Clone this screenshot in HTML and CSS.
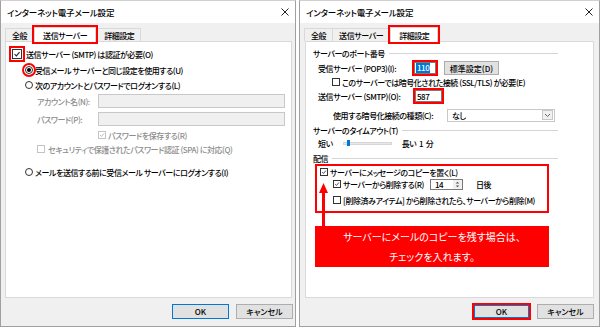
FILE: index.html
```html
<!DOCTYPE html>
<html lang="ja">
<head>
    <meta charset="UTF-8">
    <meta name="viewport" content="width=device-width, initial-scale=1.0">
    <title>インターネット電子メール設定</title>
    <link rel="stylesheet" href="styles.css">
</head>
<body>
    <!-- 左: 送信サーバー タブ -->
    <div class="dialog left">
        <div class="titlebar">
            <span>インターネット電子メール設定</span>
            <svg class="close" viewBox="0 0 8 8"><path d="M0.5 0.5 L7.5 7.5 M7.5 0.5 L0.5 7.5"/></svg>
        </div>
        <div class="tabs">
            <span class="tab">全般</span>
            <span class="tab active mark">送信サーバー</span>
            <span class="tab">詳細設定</span>
        </div>
        <div class="panel">
            <div class="row l-r1">
                <span class="cb big mark"><svg viewBox="0 0 10 10"><path d="M2 5.2 L4.2 7.4 L8.2 2.6"/></svg></span>
                送信サーバー (SMTP) は認証が必要(O)
            </div>
            <div class="row l-r2 ind1"><span class="radio on mark"></span>受信メール サーバーと同じ設定を使用する(U)</div>
            <div class="row l-r3 ind1"><span class="radio"></span>次のアカウントとパスワードでログオンする(L)</div>
            <div class="row l-acct ind2 dim"><span class="flabel">アカウント名(N):</span><span class="input off wide"></span></div>
            <div class="row l-pass ind2 dim"><span class="flabel">パスワード(P):</span><span class="input off wide"></span></div>
            <div class="row l-save ind3 dim">
                <span class="cb off"><svg viewBox="0 0 10 10"><path d="M2 5.2 L4.2 7.4 L8.2 2.6"/></svg></span>
                パスワードを保存する(R)
            </div>
            <div class="row l-spa ind2 dim"><span class="cb off"></span>セキュリティで保護されたパスワード認証 (SPA) に対応(Q)</div>
            <div class="row l-r8 ind1"><span class="radio"></span>メールを送信する前に受信メール サーバーにログオンする(I)</div>
        </div>
        <div class="footer">
            <button class="btn default">OK</button>
            <button class="btn">キャンセル</button>
        </div>
    </div>

    <!-- 右: 詳細設定 タブ -->
    <div class="dialog right">
        <div class="titlebar">
            <span>インターネット電子メール設定</span>
            <svg class="close" viewBox="0 0 8 8"><path d="M0.5 0.5 L7.5 7.5 M7.5 0.5 L0.5 7.5"/></svg>
        </div>
        <div class="tabs">
            <span class="tab">全般</span>
            <span class="tab">送信サーバー</span>
            <span class="tab active mark">詳細設定</span>
        </div>
        <div class="panel">
            <div class="group r-g1"><span>サーバーのポート番号</span></div>
            <div class="row r-pop">
                <span class="plabel">受信サーバー (POP3)(I):</span>
                <span class="input port mark"><span class="hl">110</span></span>
                <button class="btn std">標準設定(D)</button>
            </div>
            <div class="row r-ssl"><span class="cb"></span>このサーバーでは暗号化された接続 (SSL/TLS) が必要(E)</div>
            <div class="row r-smtp">
                <span class="plabel">送信サーバー (SMTP)(O):</span>
                <span class="input port wide2 mark">587</span>
            </div>
            <div class="row r-enc">
                <span class="elabel">使用する暗号化接続の種類(C):</span>
                <span class="select">なし<span class="drop"><svg viewBox="0 0 8 8"><path d="M1.5 3 L4 5.5 L6.5 3"/></svg></span></span>
            </div>
            <div class="group r-g2"><span>サーバーのタイムアウト(T)</span></div>
            <div class="row r-slide">
                <span>短い</span>
                <span class="track"><span class="thumb"></span></span>
                <span>長い&nbsp;&nbsp;1&nbsp;&nbsp;分</span>
            </div>
            <div class="group r-g3"><span>配信</span></div>
            <div class="deliver">
                <div class="row">
                    <span class="cb"><svg viewBox="0 0 10 10"><path d="M2 5.2 L4.2 7.4 L8.2 2.6"/></svg></span>
                    サーバーにメッセージのコピーを置く(L)
                </div>
                <div class="row sub">
                    <span class="cb"><svg viewBox="0 0 10 10"><path d="M2 5.2 L4.2 7.4 L8.2 2.6"/></svg></span>
                    <span class="dlabel">サーバーから削除する(R)</span>
                    <span class="spin"><span class="num">14</span><span class="arrows"><svg viewBox="0 0 8 10"><path d="M2 4 L4 2 L6 4 Z M2 6 L4 8 L6 6 Z"/></svg></span></span>
                    <span class="days">日後</span>
                </div>
                <div class="row sub last"><span class="cb"></span>[削除済みアイテム] から削除されたら、サーバーから削除(M)</div>
            </div>
            <svg class="arrow" viewBox="0 0 11 45"><path d="M5.5 1 L10 11 L1 11 Z M4 10 H7 V45 H4 Z"/></svg>
            <div class="callout">サーバーにメールのコピーを残す場合は、<br>チェックを入れます。</div>
        </div>
        <div class="footer">
            <button class="btn default mark">OK</button>
            <button class="btn">キャンセル</button>
        </div>
    </div>
</body>
</html>
```

FILE: styles.css
```css
* {
    box-sizing: border-box;
}

body {
    margin: 0;
    width: 600px;
    height: 327px;
    display: flex;
    gap: 3px;
    background: #fff;
    font-family: "Noto Sans CJK JP", sans-serif;
    font-size: 8px;
    font-weight: 500;
    font-feature-settings: "palt";
    letter-spacing: -0.45px;
    color: #000;
    overflow: hidden;
}

/* ダイアログ枠 */
.dialog {
    height: 327px;
    border: 1px solid #a0a0a0;
    border-top-color: #d0d0d0;
    background: #f0f0f0;
    display: flex;
    flex-direction: column;
}

.dialog.left {
    width: 296px;
}

.dialog.right {
    width: 301px;
}

.titlebar {
    height: 22px;
    flex: none;
    background: #fff;
    display: flex;
    align-items: center;
    justify-content: space-between;
    padding: 0 6px 0 6px;
    font-size: 8.5px;
    letter-spacing: -0.2px;
}

.close {
    width: 8px;
    height: 8px;
    stroke: #222;
    stroke-width: 1;
    fill: none;
}

/* タブ */
.tabs {
    height: 18px;
    flex: none;
    display: flex;
    align-items: flex-end;
    padding-left: 4px;
}

.tab {
    height: 13px;
    padding: 0 6px;
    border: 1px solid #d9d9d9;
    border-bottom: 0;
    background: #f0f0f0;
    display: flex;
    align-items: center;
    margin-right: -1px;
}

.tab.active {
    height: 15px;
    padding: 0 8px;
    margin: 0 1px -1px 1px;
    background: #fff;
    position: relative;
    z-index: 1;
}

.mark {
    outline: 2px solid #f00;
    outline-offset: 0;
}

.panel {
    flex: 1;
    background: #fff;
    border: 1px solid #d9d9d9;
    position: relative;
}

.left .panel {
    margin: 0 3px 0 4px;
    padding-top: 5px;
}

.right .panel {
    margin: 0 5px 0 5px;
    padding-top: 5px;
}

.footer {
    height: 28px;
    flex: none;
    display: flex;
    justify-content: flex-end;
    align-items: flex-start;
    gap: 7px;
    padding: 6px 2px 0 0;
}

.right .footer {
    gap: 8px;
    padding-right: 5px;
}

.btn {
    width: 57px;
    height: 15px;
    border: 1px solid #adadad;
    background: #e1e1e1;
    font: inherit;
    font-size: 8px;
    padding: 0;
    color: #000;
}

.btn.default {
    border-color: #0078d7;
}

.right .btn.default {
    width: 55px;
    margin-top: 1px;
    height: 13px;
}

/* 行 */
.row {
    display: flex;
    align-items: center;
    height: 14px;
    white-space: nowrap;
}

.dim {
    color: #8c8c8c;
}

.cb {
    width: 8px;
    height: 8px;
    flex: none;
    border: 1px solid #333;
    background: #fff;
    margin-right: 2px;
    display: flex;
}

.cb svg {
    width: 100%;
    height: 100%;
    fill: none;
    stroke: #222;
    stroke-width: 1.3;
}

.cb.big {
    width: 10px;
    height: 10px;
    margin-right: 4px;
}

.cb.big.mark {
    outline-offset: 1px;
}

.cb.off {
    border-color: #c4c4c4;
}

.cb.off svg {
    stroke: #a8a8a8;
}

.radio {
    width: 8px;
    height: 8px;
    flex: none;
    border: 1px solid #333;
    border-radius: 50%;
    background: #fff;
    margin-right: 2px;
    display: flex;
    align-items: center;
    justify-content: center;
}

.radio.on::after {
    content: "";
    width: 4px;
    height: 4px;
    border-radius: 50%;
    background: #000;
}

.radio.mark {
    outline-offset: 1px;
}

.input {
    height: 14px;
    flex: none;
    border: 1px solid #7a7a7a;
    background: #fff;
    display: flex;
    align-items: center;
}

.input.off {
    background: #f0f0f0;
    border-color: #c8c8c8;
}

.input.wide {
    width: 187px;
}

/* 左パネル */
.l-r1 {
    margin-left: 6px;
}

.ind1 {
    margin-left: 19px;
}

.ind2 {
    margin-left: 31px;
}

.ind3 {
    margin-left: 92px;
}

.l-r2 {
    margin-top: 2px;
}

.l-r3 {
    margin-top: 1px;
}

.l-acct {
    margin-top: 2px;
}

.l-pass {
    margin-top: 4px;
}

.l-save {
    margin-top: 2px;
}

.l-spa .cb {
    margin-right: 3px;
}

.l-r8 {
    margin-top: 9px;
}

.flabel {
    width: 61px;
    flex: none;
}

/* 右パネル */
.group {
    display: flex;
    align-items: center;
    height: 12px;
    margin: 0 35px 0 7px;
    color: #000;
}

.group::after {
    content: "";
    flex: 1;
    height: 1px;
    background: #d5d5d5;
    margin-left: 4px;
}

.r-pop {
    margin: 2px 0 0 12px;
}

.plabel {
    width: 96px;
    flex: none;
}

.input.port {
    width: 22px;
    height: 12px;
    padding-left: 1px;
}

.input.wide2 {
    width: 27px;
    margin-left: 1px;
}

.hl {
    background: #0078d7;
    color: #fff;
    padding: 0 1px;
    line-height: 10px;
}

.btn.std {
    width: 55px;
    height: 14px;
    margin-left: 8px;
}

.r-ssl {
    margin-left: 26px;
}

.r-smtp {
    margin-left: 12px;
}

.r-enc {
    margin: 5px 0 0 27px;
}

.elabel {
    width: 114px;
    flex: none;
}

.select {
    width: 108px;
    height: 13px;
    border: 1px solid #c8c8c8;
    background: #fff;
    display: flex;
    align-items: center;
    justify-content: space-between;
    padding: 0 1px 0 4px;
}

.drop {
    width: 11px;
    height: 10px;
    border: 1px solid #c8c8c8;
    background: #f0f0f0;
    display: flex;
}

.drop svg {
    width: 100%;
    height: 100%;
    fill: none;
    stroke: #555;
    stroke-width: 0.9;
}

.r-g2 {
    margin-top: 2px;
}

.r-slide {
    margin-left: 12px;
}

.track {
    width: 49px;
    height: 3px;
    background: #e7e7e7;
    border: 1px solid #d6d6d6;
    margin: 0 10px 0 10px;
    position: relative;
}

.thumb {
    position: absolute;
    left: 3px;
    top: -3px;
    width: 3px;
    height: 6px;
    background: #0078d7;
}

.r-g3 {
    margin-top: 2px;
}

.deliver {
    margin-left: 9px;
    width: 234px;
    border: 2px solid #f00;
    padding: 0 0 5px 3px;
}

.deliver .row {
    height: 12px;
}

.deliver .sub {
    margin-left: 13px;
}

.deliver .last {
    margin-top: 4px;
}

.dlabel {
    width: 87px;
    flex: none;
}

.spin {
    width: 33px;
    height: 11px;
    flex: none;
    border: 1px solid #7a7a7a;
    background: #fff;
    display: flex;
    align-items: center;
    justify-content: space-between;
    padding-left: 4px;
}

.arrows {
    width: 9px;
    height: 9px;
    background: #f0f0f0;
    display: flex;
}

.arrows svg {
    width: 100%;
    height: 100%;
    fill: #555;
}

.days {
    margin-left: 13px;
}

/* 注釈 */
.arrow {
    position: absolute;
    left: 12px;
    top: 140px;
    width: 11px;
    height: 45px;
    fill: #f00;
}

.callout {
    position: absolute;
    left: 9px;
    top: 184px;
    width: 234px;
    height: 41px;
    background: #f00;
    color: #fff;
    font-size: 10px;
    font-weight: 400;
    letter-spacing: 0;
    line-height: 20px;
    text-align: center;
    padding-top: 1px;
}
```
